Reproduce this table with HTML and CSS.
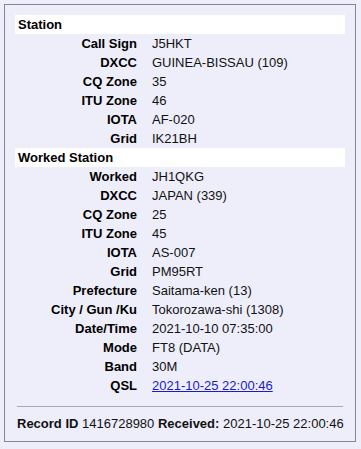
FILE: index.html
```html
<!DOCTYPE html>
<html lang="en">
<head>
  <meta charset="UTF-8" />
  <title>QSL Record</title>
  <link rel="stylesheet" href="styles.css">
</head>
<body>
  <div class="panel">
    <table class="record">
      <tr class="section"><td colspan="2">Station</td></tr>
      <tr><th>Call Sign</th><td>J5HKT</td></tr>
      <tr><th>DXCC</th><td>GUINEA-BISSAU (109)</td></tr>
      <tr><th>CQ Zone</th><td>35</td></tr>
      <tr><th>ITU Zone</th><td>46</td></tr>
      <tr><th>IOTA</th><td>AF-020</td></tr>
      <tr><th>Grid</th><td>IK21BH</td></tr>
      <tr class="section"><td colspan="2">Worked Station</td></tr>
      <tr><th>Worked</th><td>JH1QKG</td></tr>
      <tr><th>DXCC</th><td>JAPAN (339)</td></tr>
      <tr><th>CQ Zone</th><td>25</td></tr>
      <tr><th>ITU Zone</th><td>45</td></tr>
      <tr><th>IOTA</th><td>AS-007</td></tr>
      <tr><th>Grid</th><td>PM95RT</td></tr>
      <tr><th>Prefecture</th><td>Saitama-ken (13)</td></tr>
      <tr><th>City / Gun /Ku</th><td>Tokorozawa-shi (1308)</td></tr>
      <tr><th>Date/Time</th><td>2021-10-10 07:35:00</td></tr>
      <tr><th>Mode</th><td>FT8 (DATA)</td></tr>
      <tr><th>Band</th><td>30M</td></tr>
      <tr><th>QSL</th><td><a href="#">2021-10-25 22:00:46</a></td></tr>
    </table>
    <hr class="divider">
    <p class="footer"><b>Record ID</b> 1416728980 <b>Received:</b> 2021-10-25 22:00:46</p>
  </div>
</body>
</html>
```

FILE: styles.css
```css
body {
  margin: 4px;
  background: #eeeefa;
  font-family: "Liberation Sans", Arial, sans-serif;
  font-size: 13px;
  color: #111;
}

.panel {
  border: 1px solid #85859a;
  padding: 10px;
  height: 416px;
  width: 330px;
}

.record {
  width: 100%;
  border-collapse: collapse;
}

.record td,
.record th {
  padding: 2px 0;
  line-height: 15px;
}

.record th {
  width: 122px;
  text-align: right;
  padding-right: 15px;
  font-weight: bold;
  color: #000;
}

.record .section td {
  background: #fff;
  font-weight: bold;
  color: #000;
  padding: 2px 3px;
}

.record a {
  color: #1a1acc;
}

.divider {
  margin: 11px 2px 9px;
  border: 0;
  border-top: 1px solid #a8a8b4;
}

.footer {
  margin: 0;
  padding-left: 2px;
  line-height: 15px;
}
```
